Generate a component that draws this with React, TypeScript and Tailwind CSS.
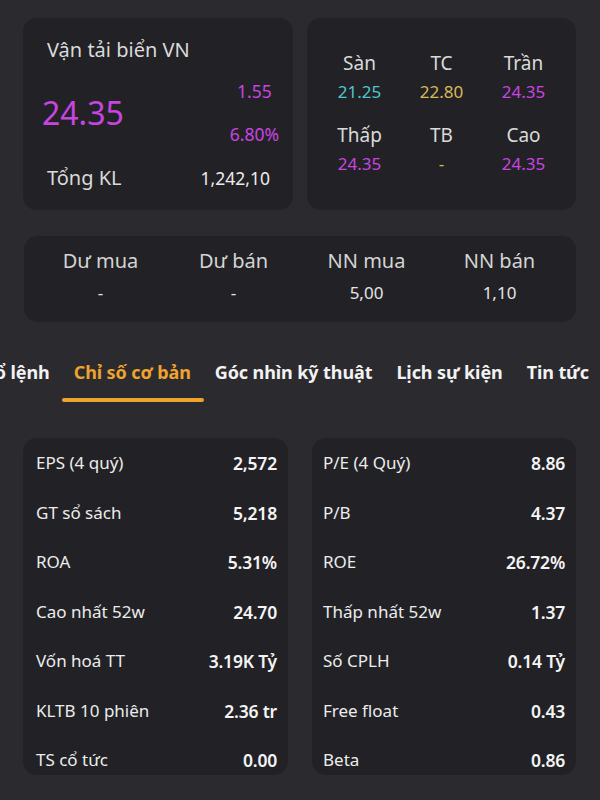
import React from "react";

const font = { fontFamily: '"Noto Sans", "Open Sans", sans-serif' };

function Card({ className = "", children }: { className?: string; children: React.ReactNode }) {
  return <div className={`bg-[#222226] rounded-[14px] ${className}`}>{children}</div>;
}

const left = [
  ["EPS (4 quý)", "2,572"],
  ["GT sổ sách", "5,218"],
  ["ROA", "5.31%"],
  ["Cao nhất 52w", "24.70"],
  ["Vốn hoá TT", "3.19K Tỷ"],
  ["KLTB 10 phiên", "2.36 tr"],
  ["TS cổ tức", "0.00"],
];
const right = [
  ["P/E (4 Quý)", "8.86"],
  ["P/B", "4.37"],
  ["ROE", "26.72%"],
  ["Thấp nhất 52w", "1.37"],
  ["Số CPLH", "0.14 Tỷ"],
  ["Free float", "0.43"],
  ["Beta", "0.86"],
];

function StatCard({ rows, className }: { rows: string[][]; className: string }) {
  return (
    <Card className={`flex flex-col gap-[23.5px] pt-[12px] pb-[2px] ${className}`}>
      {rows.map(([k, v]) => (
        <div key={k} className="flex h-[26px] items-center justify-between text-[17px] leading-[26px]">
          <span className="text-[#ececec]">{k}</span>
          <span className="font-semibold text-[17.5px] tracking-[-0.2px] text-[#f4f4f4]">{v}</span>
        </div>
      ))}
    </Card>
  );
}

export default function App() {
  const purple = "text-[#c944e0]";
  return (
    <div style={font} className="w-[600px] h-[800px] overflow-hidden bg-[#2a2a2f] text-[#dcdcdc]">
      <div className="flex gap-[14px] pt-[18px] pl-[23px] pr-[24px]">
        <Card className="w-[270px] h-[192px] flex flex-col pt-[20px] pl-[24px] pr-[14px]">
          <div className="text-[20px] leading-[24px] text-[#dadada]">Vận tải biển VN</div>
          <div className="flex items-center justify-between mt-[17px]">
            <div className={`text-[32px] leading-[40px] -ml-[5px] ${purple}`}>24.35</div>
            <div className={`flex flex-col items-center gap-[19px] text-[17.5px] leading-[24px] ${purple}`}>
              <span>1.55</span>
              <span>6.80%</span>
            </div>
          </div>
          <div className="flex items-center justify-between mt-[20px] pr-[9px]">
            <span className="text-[20px] leading-[24px] text-[#dadada]">Tổng KL</span>
            <span className="text-[17.5px] leading-[24px] text-[#ececec]">1,242,10</span>
          </div>
        </Card>
        <Card className="w-[269px] h-[192px] flex justify-center items-start pt-[33px]">
          <div className="grid grid-cols-[82px_82px_82px] gap-y-[19px] text-center">
            {[
              ["Sàn", "21.25", "text-[#4cc6cf]"],
              ["TC", "22.80", "text-[#d9b958]"],
              ["Trần", "24.35", purple],
              ["Thấp", "24.35", purple],
              ["TB", "-", "text-[#d9b958]"],
              ["Cao", "24.35", purple],
            ].map(([l, v, c]) => (
              <div key={l} className="flex flex-col items-center">
                <span className="text-[19px] leading-[24px] text-[#dadada]">{l}</span>
                <span className={`text-[17px] leading-[24px] mt-[5px] ${c}`}>{v}</span>
              </div>
            ))}
          </div>
        </Card>
      </div>

      <Card className="mx-[24px] mt-[26px] h-[86px] grid grid-cols-4 px-[10px] pt-[13px]">
        {[
          ["Dư mua", "-"],
          ["Dư bán", "-"],
          ["NN mua", "5,00"],
          ["NN bán", "1,10"],
        ].map(([l, v]) => (
          <div key={l} className="flex flex-col items-center">
            <span className="text-[20px] leading-[24px] text-[#d4d4d4]">{l}</span>
            <span className="text-[17px] leading-[24px] mt-[8px] text-[#e4e4e4]">{v}</span>
          </div>
        ))}
      </Card>

      <div className="mt-[38px] flex gap-[24px] -ml-[15px] whitespace-nowrap text-[18px] font-bold tracking-[-0.1px] text-[#f2f2f2]">
        <span className="leading-[24px]">Sổ lệnh</span>
        <div className="flex flex-col items-stretch">
          <span className="leading-[24px] text-[#efa22e]">Chỉ số cơ bản</span>
          <div className="mt-[14px] -ml-[12px] -mr-[13px] h-[4px] rounded-full bg-[#efa22e]" />
        </div>
        <span className="leading-[24px]">Góc nhìn kỹ thuật</span>
        <span className="leading-[24px]">Lịch sự kiện</span>
        <span className="leading-[24px]">Tin tức</span>
      </div>

      <div className="flex gap-[24px] pl-[23px] mt-[36px]">
        <StatCard rows={left} className="w-[265px] pl-[13px] pr-[11px]" />
        <StatCard rows={right} className="w-[264px] pl-[11px] pr-[11px]" />
      </div>
    </div>
  );
}
